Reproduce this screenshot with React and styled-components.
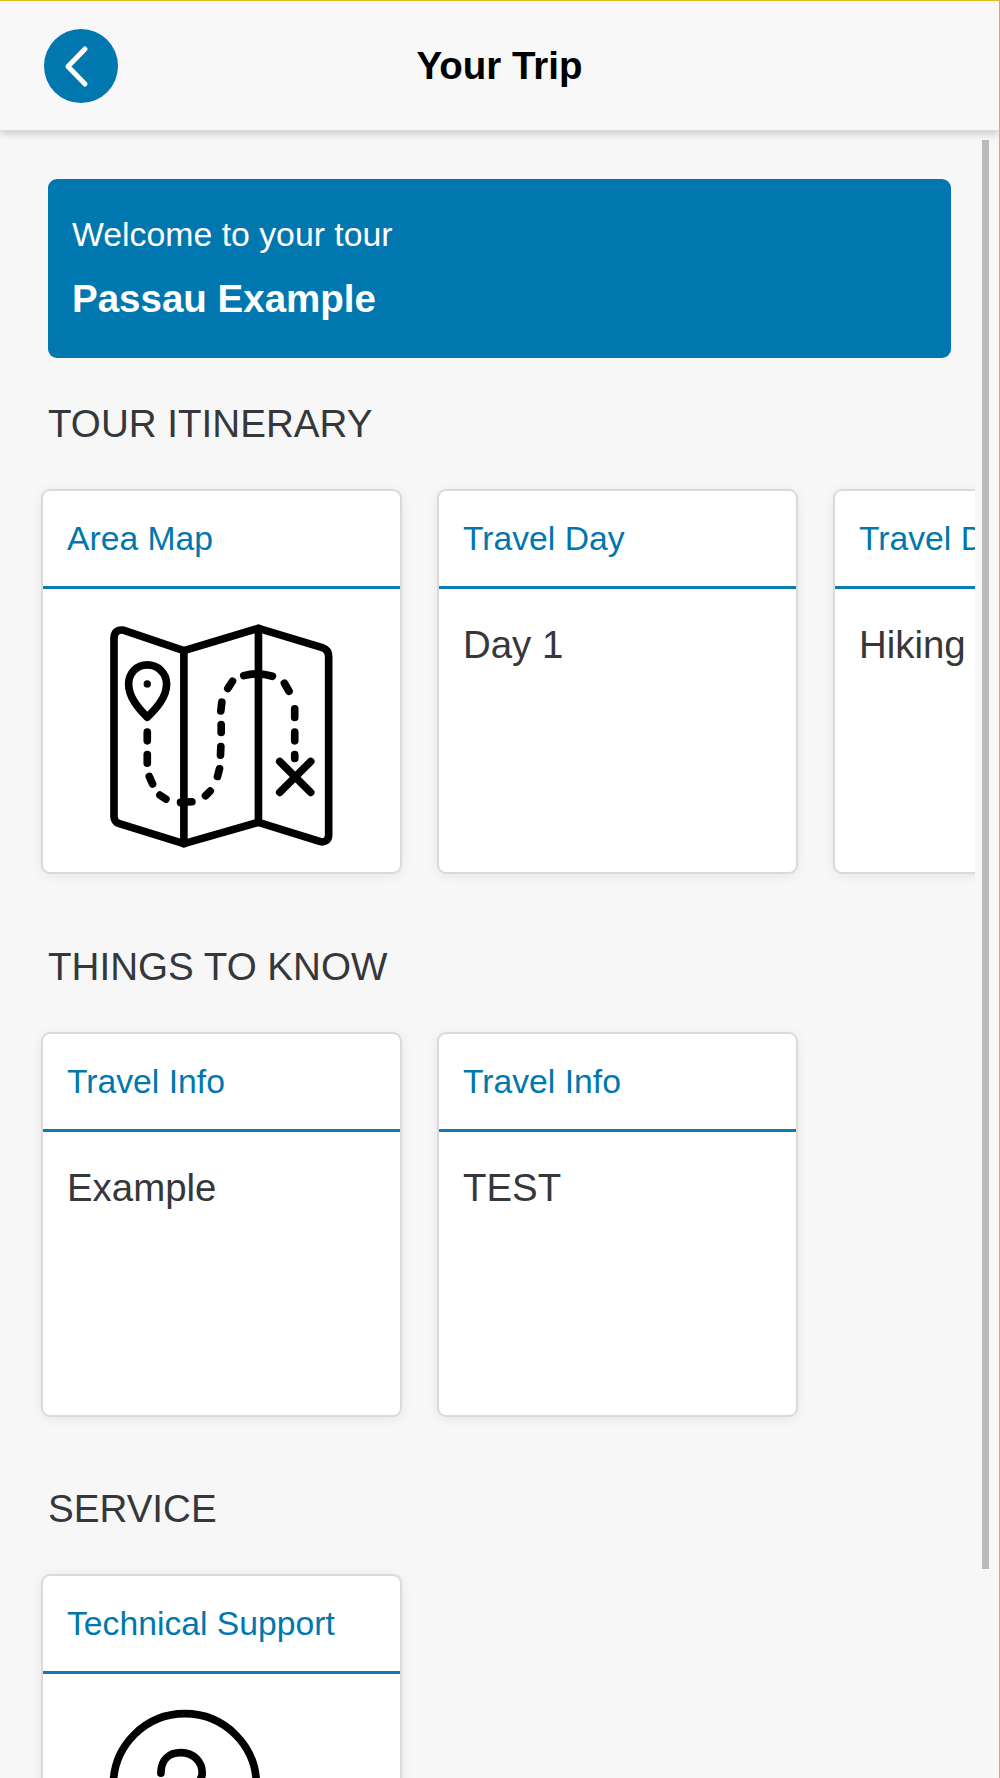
import styled, { createGlobalStyle } from "styled-components"

const blue = "#0077AE"

const GlobalStyle = createGlobalStyle`
    html, body {
        margin: 0;
        padding: 0;
        background: #F7F7F7;
    }
    * {
        box-sizing: border-box;
    }
`

const Page = styled.div`
    position: relative;
    width: 1000px;
    height: 1778px;
    overflow: hidden;
    background: #F7F7F7;
    border-top: 1px solid #E5B81C;
    border-right: 1px solid #D9B23A;
    font-family: "Liberation Sans", Arial, sans-serif;
`

const Header = styled.header`
    position: relative;
    height: 130px;
    display: grid;
    grid-template-columns: 1fr auto 1fr;
    align-items: center;
    padding: 0 44px;
    background: #F8F8F8;
    border-bottom: 1px solid #DDD;
    box-shadow: 0 2px 8px rgba(0, 0, 0, 0.22);
`

const BackButton = styled.button`
    width: 74px;
    height: 74px;
    padding: 0;
    border: none;
    border-radius: 50%;
    background: ${blue};
    display: flex;
    align-items: center;
    justify-content: center;
`

const HeaderTitle = styled.h1`
    margin: 1px 0 0;
    font-size: 38.5px;
    font-weight: 700;
    color: #000;
`

const Main = styled.main`
    padding: 48px 48px 0;
`

const Banner = styled.div`
    height: 179px;
    width: 903px;
    padding: 35px 24px 0;
    border-radius: 9px;
    background: ${blue};
    color: #FFF;
`

const BannerLabel = styled.div`
    font-size: 33.8px;
    line-height: 40px;
`

const BannerName = styled.div`
    margin-top: 24px;
    font-size: 38.5px;
    line-height: 42px;
    font-weight: 700;
`

const Section = styled.section`
    height: 542.6px;
`

const SectionTitle = styled.h2`
    margin: 0;
    height: 131px;
    padding-top: 44px;
    font-size: 38.6px;
    line-height: 44px;
    font-weight: 400;
    color: #36373B;
`

const CardRow = styled.div`
    display: flex;
    gap: 35px;
    width: 951px;
    margin: -18px 0 0 -24px;
    padding: 18px 0 18px 17px;
    overflow: hidden;
`

const Card = styled.article`
    flex: 0 0 361px;
    height: 385px;
    border: 2px solid #DADADA;
    border-radius: 9px;
    background: #FFF;
    box-shadow: 0 2px 12px rgba(0, 0, 0, 0.07);
`

const CardTitle = styled.div`
    height: 98px;
    padding: 28px 24px 0;
    border-bottom: 3px solid #0A7DB3;
    font-size: 33.7px;
    line-height: 38px;
    color: ${blue};
    white-space: nowrap;
    overflow: hidden;
`

const CardText = styled.div`
    padding: 34px 24px 0;
    font-size: 38.4px;
    line-height: 44px;
    color: #36373B;
    white-space: nowrap;
    overflow: hidden;
`

const CardIcon = styled.div`
    display: flex;
    justify-content: ${({ $left }) => ($left ? "flex-start" : "center")};
    padding: 33px 0 0 ${({ $left }) => ($left ? "64px" : "0")};
`

const Scrollbar = styled.div`
    position: absolute;
    top: 139px;
    left: 982px;
    width: 7px;
    height: 1429px;
    background: #BABABA;
`

function Chevron() {
    return (
        <svg width="74" height="74" viewBox="0 0 74 74" fill="none">
            <path d="M41 20 L24 37.5 L41 55" stroke="#FFF" strokeWidth="5" strokeLinecap="round" strokeLinejoin="round" />
        </svg>
    )
}

function MapIcon() {
    return (
        <svg width="227" height="227" viewBox="234 426 682 682" fill="none" stroke="#000" strokeWidth="23" strokeLinecap="round" strokeLinejoin="round">
            <path d="M252 475 C252 455 265 447 282 451 L462 512 L686 445 L878 503 C890 507 897 517 897 530 L897 1065 C897 1082 885 1090 870 1085 L686 1028 L462 1092 L268 1032 C258 1029 252 1020 252 1010 Z" />
            <path d="M462 512 V1092 M686 445 V1028" />
            <path d="M352 712 C325 685 296 652 296 612 C296 580 320 555 352 555 C384 555 410 580 410 612 C410 652 380 685 352 712 Z" />
            <circle cx="352" cy="612" r="11" fill="#000" stroke="none" />
            <path d="M352 757 V783 M352 824 V850 M358 890 L368 913 M390 946 L408 958 M452 968 L486 966 M527 948 L541 934 M563 890 L569 867 M572 826 L573 800 M574 758 V734 M573 693 L576 667 M594 626 L608 604 M642 587 Q685 576 728 589 M764 610 L778 634 M795 687 V713 M795 757 V783 M795 824 V836" />
            <path d="M750 845 L843 938 M843 845 L750 938" />
        </svg>
    )
}

function HelpIcon() {
    return (
        <svg width="227" height="227" viewBox="234 441 682 682" fill="none" stroke="#000" strokeWidth="23" strokeLinecap="round">
            <circle cx="468" cy="676" r="215" />
            <path d="M396 640 C396 600 420 578 456 578 C494 578 520 605 520 640 C520 680 462 690 462 740" />
        </svg>
    )
}

export default function App() {
    return (
        <Page>
            <GlobalStyle />
            <Header>
                <BackButton aria-label="Back"><Chevron /></BackButton>
                <HeaderTitle>Your Trip</HeaderTitle>
            </Header>
            <Main>
                <Banner>
                    <BannerLabel>Welcome to your tour</BannerLabel>
                    <BannerName>Passau Example</BannerName>
                </Banner>
                <Section>
                    <SectionTitle>TOUR ITINERARY</SectionTitle>
                    <CardRow>
                        <Card>
                            <CardTitle>Area Map</CardTitle>
                            <CardIcon><MapIcon /></CardIcon>
                        </Card>
                        <Card>
                            <CardTitle>Travel Day</CardTitle>
                            <CardText>Day 1</CardText>
                        </Card>
                        <Card>
                            <CardTitle>Travel Day</CardTitle>
                            <CardText>Hiking</CardText>
                        </Card>
                    </CardRow>
                </Section>
                <Section>
                    <SectionTitle>THINGS TO KNOW</SectionTitle>
                    <CardRow>
                        <Card>
                            <CardTitle>Travel Info</CardTitle>
                            <CardText>Example</CardText>
                        </Card>
                        <Card>
                            <CardTitle>Travel Info</CardTitle>
                            <CardText>TEST</CardText>
                        </Card>
                    </CardRow>
                </Section>
                <Section>
                    <SectionTitle>SERVICE</SectionTitle>
                    <CardRow>
                        <Card>
                            <CardTitle>Technical Support</CardTitle>
                            <CardIcon $left><HelpIcon /></CardIcon>
                        </Card>
                    </CardRow>
                </Section>
            </Main>
            <Scrollbar />
        </Page>
    )
}
